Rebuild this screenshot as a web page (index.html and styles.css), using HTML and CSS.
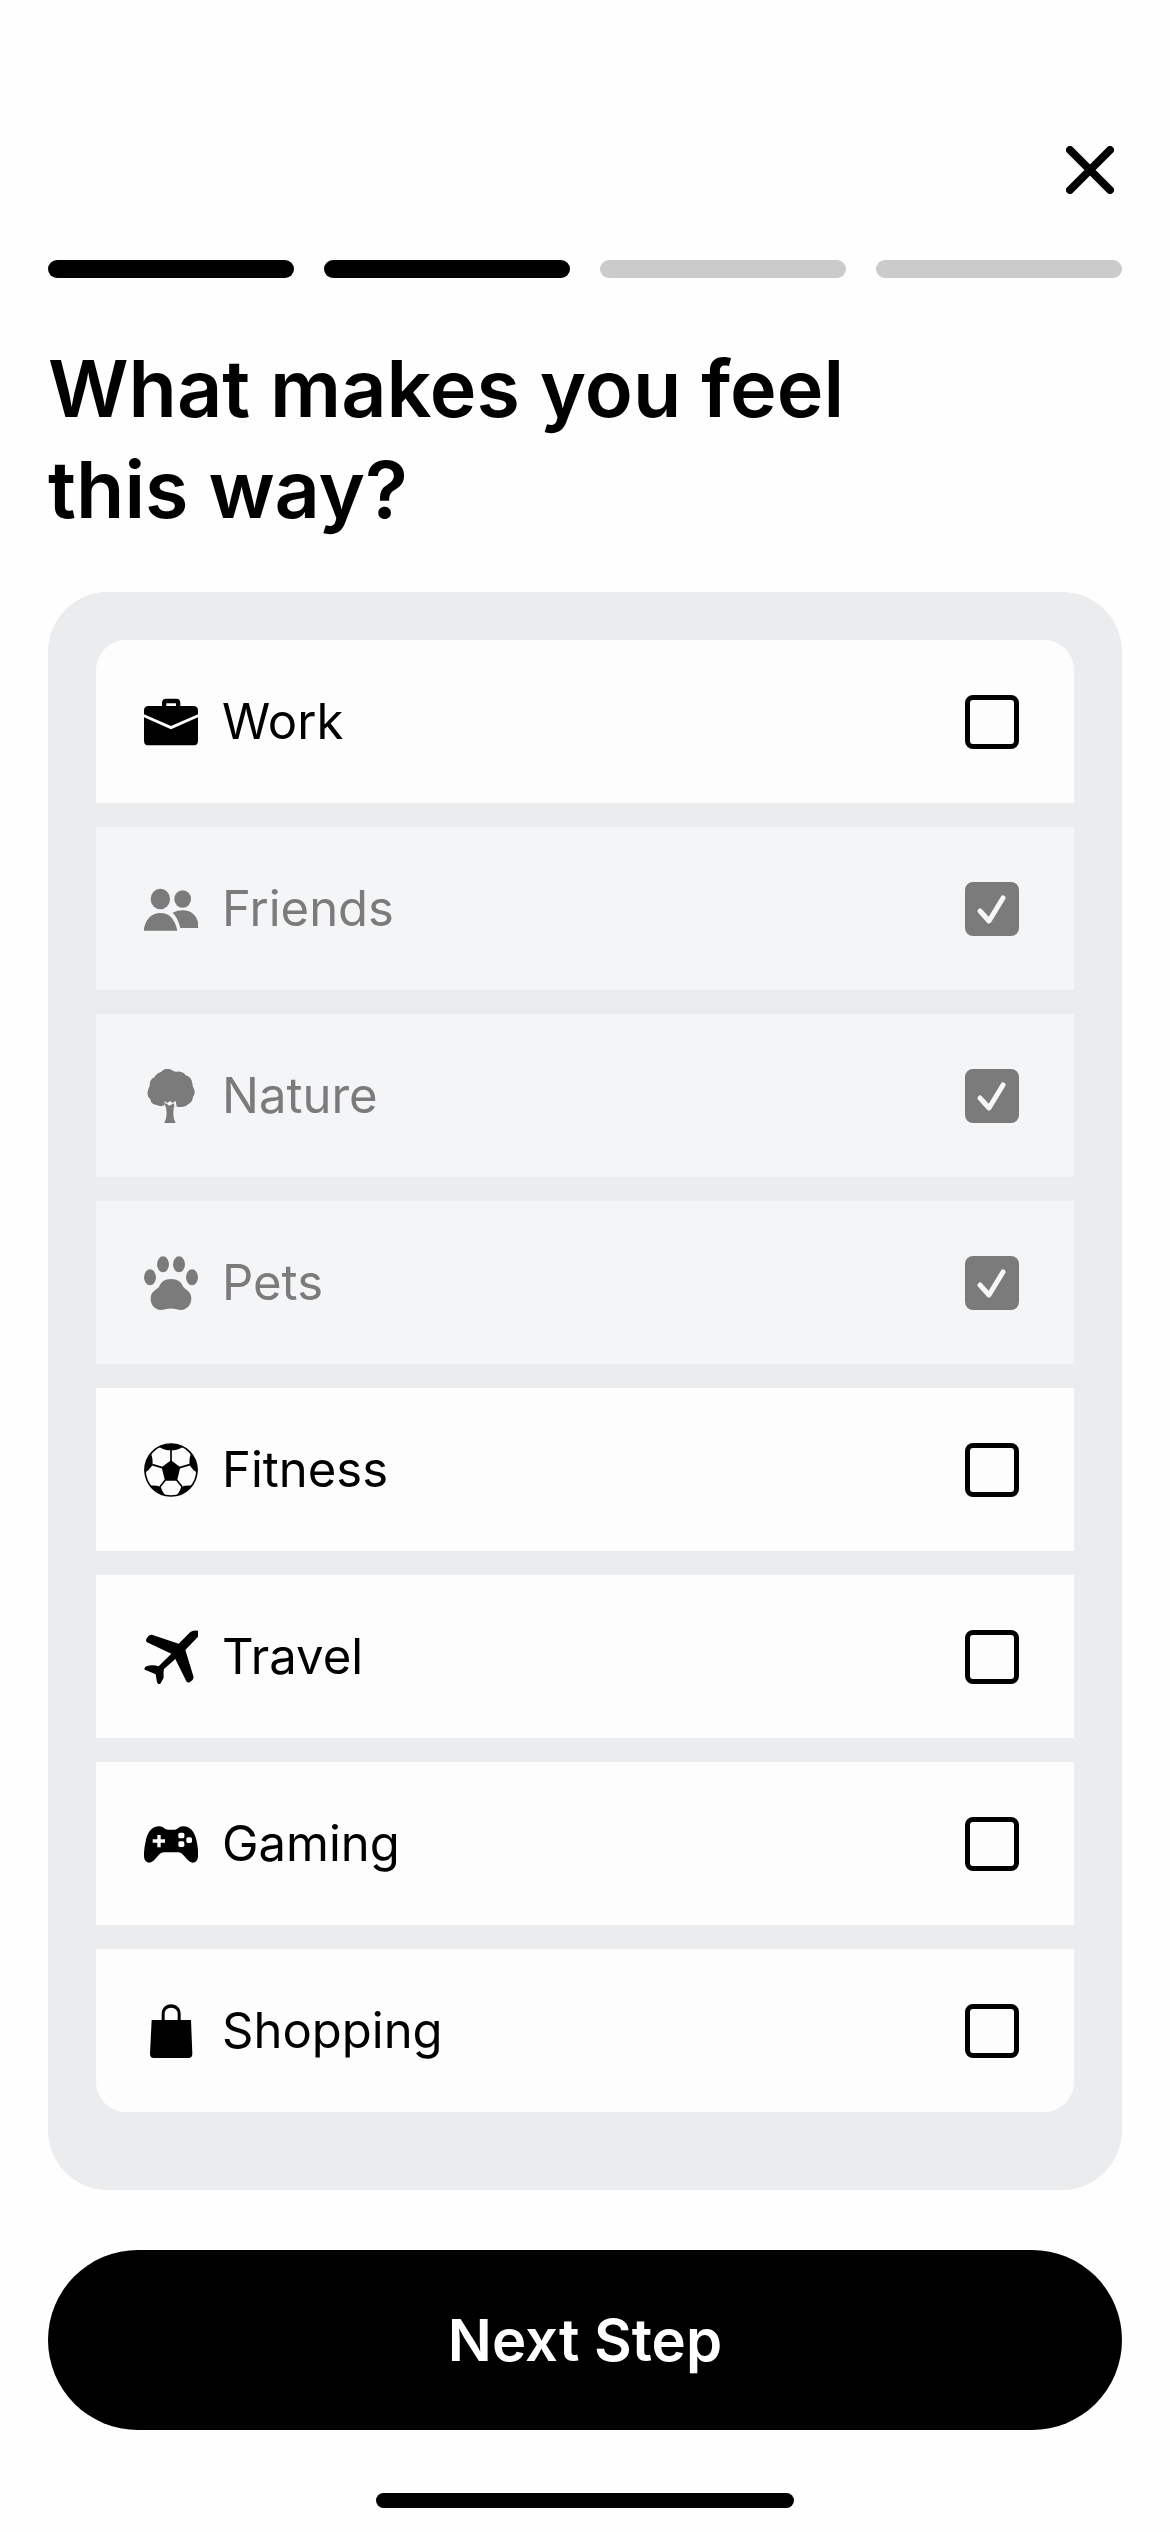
FILE: index.html
```html
<!DOCTYPE html>
<html lang="en">
<head>
    <meta charset="UTF-8">
    <meta name="viewport" content="width=device-width, initial-scale=1.0">
    <title>What makes you feel this way?</title>
    <link rel="stylesheet" href="styles.css">
</head>
<body>
    <form class="screen">
        <div class="top-bar">
            <button type="button" class="btn-close" aria-label="Close">
                <svg viewBox="0 0 48 48"><path d="M4 4L44 44M44 4L4 44"/></svg>
            </button>
        </div>

        <div class="progress">
            <span class="step done"></span>
            <span class="step done"></span>
            <span class="step"></span>
            <span class="step"></span>
        </div>

        <h1>What makes you feel<br>this way?</h1>

        <div class="options">
            <label class="option">
                <svg class="icon" viewBox="0 0 162 162">
                    <path d="M0 58V47Q0 33 14 33H54V24Q54 11 66 11H97Q109 11 109 24V33H148Q162 33 162 47V58L81 93ZM67 33H96V25H67Z" fill-rule="evenodd"/>
                    <path d="M0 67L81 103L162 67V137Q162 151 148 151H14Q0 151 0 137Z"/>
                </svg>
                <span class="name">Work</span>
                <input type="checkbox" class="check">
            </label>
            <label class="option">
                <svg class="icon" viewBox="0 0 162 162">
                    <ellipse cx="49" cy="51" rx="29" ry="31"/>
                    <ellipse cx="116" cy="51" rx="25" ry="26"/>
                    <path d="M0 146V139C6 110 24 93 49 93C75 93 92 109 100 146Z"/>
                    <path d="M86 92Q100 85 116 85C140 85 157 99 162 121V138H109Q102 108 86 92Z"/>
                </svg>
                <span class="name">Friends</span>
                <input type="checkbox" class="check" checked>
            </label>
            <label class="option">
                <svg class="icon" viewBox="0 0 162 162">
                    <path d="M52 8Q62 -5 82 2Q92 10 99 8Q116 6 125 19Q142 24 145 42Q145 50 149 58Q156 72 147 83Q146 99 133 105Q124 117 98 113L95 96L85 102L78 96L70 102L62 96V109Q49 114 40 109Q21 107 19 91Q8 82 11 68Q12 57 17 52Q15 33 31 25Q37 13 52 8Z"/>
                    <path d="M64 101L76 110L90 103L91 112Q88 119 88 136Q88 150 95 162H61Q68 148 68 132Q68 116 63 108Z"/>
                </svg>
                <span class="name">Nature</span>
                <input type="checkbox" class="check" checked>
            </label>
            <label class="option">
                <svg class="icon" viewBox="0 0 162 162">
                    <ellipse cx="57" cy="25" rx="18" ry="24"/>
                    <ellipse cx="105" cy="25" rx="18" ry="24"/>
                    <ellipse cx="18" cy="64" rx="18" ry="24"/>
                    <ellipse cx="144" cy="64" rx="18" ry="24"/>
                    <path d="M81 69C101 69 111 78 117 91C121 101 142 105 142 127C142 147 130 159 114 162Q103 162 95 159Q81 156 67 159Q58 162 48 162C30 159 20 147 20 127C20 105 41 101 46 91C52 78 61 69 81 69Z"/>
                </svg>
                <span class="name">Pets</span>
                <input type="checkbox" class="check" checked>
            </label>
            <label class="option">
                <svg class="icon" viewBox="0 0 162 162">
                    <circle class="seam" cx="81" cy="81" r="78"/>
                    <path class="seam" d="M81 54V21M107 74L137 65M98 111L114 131M64 111L48 131M55 74L25 65"/>
                    <path d="M81 52L109 73L99 113H63L53 73Z"/>
                    <path d="M43 11Q81 -7 119 11Q101 22 81 22Q61 22 43 11Z"/>
                    <path d="M22 33Q0 56 2 90Q15 82 26 66Q27 48 22 33Z"/>
                    <path d="M140 33Q162 56 160 90Q147 82 136 66Q135 48 140 33Z"/>
                    <path d="M17 128Q34 126 50 131Q54 145 64 158Q34 152 17 128Z"/>
                    <path d="M145 128Q128 126 112 131Q108 145 98 158Q128 152 145 128Z"/>
                </svg>
                <span class="name">Fitness</span>
                <input type="checkbox" class="check">
            </label>
            <label class="option">
                <svg class="icon" viewBox="0 0 162 162">
                    <path d="M104 41L139 6Q146 0 162 2V20L124 60L149 142Q149 149 138 156Q131 160 127 154L94 87L60 117Q58 128 59 143L50 160Q43 166 39 157L35 133L3 119Q-2 115 7 109Q25 103 44 109L82 71L9 37Q2 31 11 21Q17 13 26 15Z"/>
                </svg>
                <span class="name">Travel</span>
                <input type="checkbox" class="check">
            </label>
            <label class="option">
                <svg class="icon" viewBox="0 0 162 162">
                    <path d="M46 28Q55 28 63 35Q67 38 73 38H90Q96 38 100 35Q108 28 117 28C140 28 151 45 157 68Q164 99 162 120Q160 137 146 137Q139 137 132 130L115 111Q110 106 103 106H59Q52 106 47 111L30 130Q23 137 15 137Q1 136 0 118Q-1 98 6 68C12 45 23 28 46 28Z"/>
                    <g class="cutout">
                        <path d="M40 54H50V67H63V77H50V91H40V77H26V67H40Z"/>
                        <rect x="103" y="47" width="18" height="17" rx="5"/>
                        <rect x="127" y="61" width="17" height="17" rx="5"/>
                        <rect x="103" y="73" width="18" height="17" rx="5"/>
                    </g>
                </svg>
                <span class="name">Gaming</span>
                <input type="checkbox" class="check">
            </label>
            <label class="option">
                <svg class="icon" viewBox="0 0 162 162">
                    <path d="M23 48H53V31C53 12 65 1 81 1C98 1 110 12 110 31V48H141L145 149Q145 162 133 162H29Q18 162 18 149ZM62 48H101V31Q101 11 81 11Q62 11 62 31Z" fill-rule="evenodd"/>
                </svg>
                <span class="name">Shopping</span>
                <input type="checkbox" class="check">
            </label>
        </div>

        <button type="submit" class="btn-next">Next Step</button>
        <div class="home-indicator"></div>
    </form>
</body>
</html>
```

FILE: styles.css
```css
* {
    margin: 0;
    padding: 0;
    box-sizing: border-box;
}

body {
    font-family: Inter, 'Liberation Sans', sans-serif;
    background: #fefefe;
    color: #000;
    min-height: 100vh;
}

.screen {
    display: flex;
    flex-direction: column;
    padding: 140px 48px 24px;
}

.top-bar {
    display: flex;
    justify-content: flex-end;
}

.btn-close {
    width: 60px;
    height: 60px;
    margin-right: 2px;
    border: none;
    background: none;
    cursor: pointer;
}

.btn-close svg {
    display: block;
    width: 48px;
    height: 48px;
    margin: 0 auto;
    fill: none;
    stroke: #000;
    stroke-width: 8px;
    stroke-linecap: round;
}

.progress {
    display: flex;
    gap: 30px;
    margin-top: 60px;
}

.step {
    flex: 1;
    height: 18px;
    border-radius: 9px;
    background: #cbcbcb;
}

.step.done {
    background: #000;
}

h1 {
    margin-top: 60px;
    font-size: 79px;
    font-weight: 600;
    line-height: 101px;
}

.options {
    display: flex;
    flex-direction: column;
    gap: 24px;
    margin-top: 52px;
    padding: 48px 48px 78px;
    border-radius: 60px;
    background: #ebecee;
}

.option {
    display: flex;
    align-items: center;
    gap: 24px;
    padding: 51px 55px 51px 48px;
    background: #fdfdfd;
    font-size: 49px;
    line-height: 61px;
    cursor: pointer;
}

.option:first-child {
    border-radius: 30px 30px 0 0;
}

.option:last-child {
    border-radius: 0 0 30px 30px;
}

.option:has(:checked) {
    background: #f4f5f7;
    color: #7b7b7b;
}

.icon {
    flex: none;
    width: 54px;
    height: 54px;
    fill: currentColor;
}

.seam {
    fill: none;
    stroke: currentColor;
    stroke-width: 5px;
}

.cutout {
    fill: #fdfdfd;
}

.name {
    flex: 1;
}

.check {
    appearance: none;
    flex: none;
    width: 54px;
    height: 54px;
    border: 5px solid #000;
    border-radius: 8px;
    cursor: pointer;
}

.check:checked {
    border: none;
    background: #7b7b7b url("data:image/svg+xml,%3Csvg xmlns='http://www.w3.org/2000/svg' viewBox='0 0 54 54'%3E%3Cpath d='M15 29L24 39L38 16' fill='none' stroke='%23f6f7f8' stroke-width='5' stroke-linecap='round' stroke-linejoin='round'/%3E%3C/svg%3E") center / 54px no-repeat;
}

.btn-next {
    height: 180px;
    margin-top: 60px;
    border: none;
    border-radius: 90px;
    background: #000;
    color: #fff;
    font-family: inherit;
    font-size: 58px;
    font-weight: 600;
    cursor: pointer;
}

.home-indicator {
    align-self: center;
    width: 39%;
    height: 15px;
    margin-top: 63px;
    border-radius: 8px;
    background: #000;
}
```
